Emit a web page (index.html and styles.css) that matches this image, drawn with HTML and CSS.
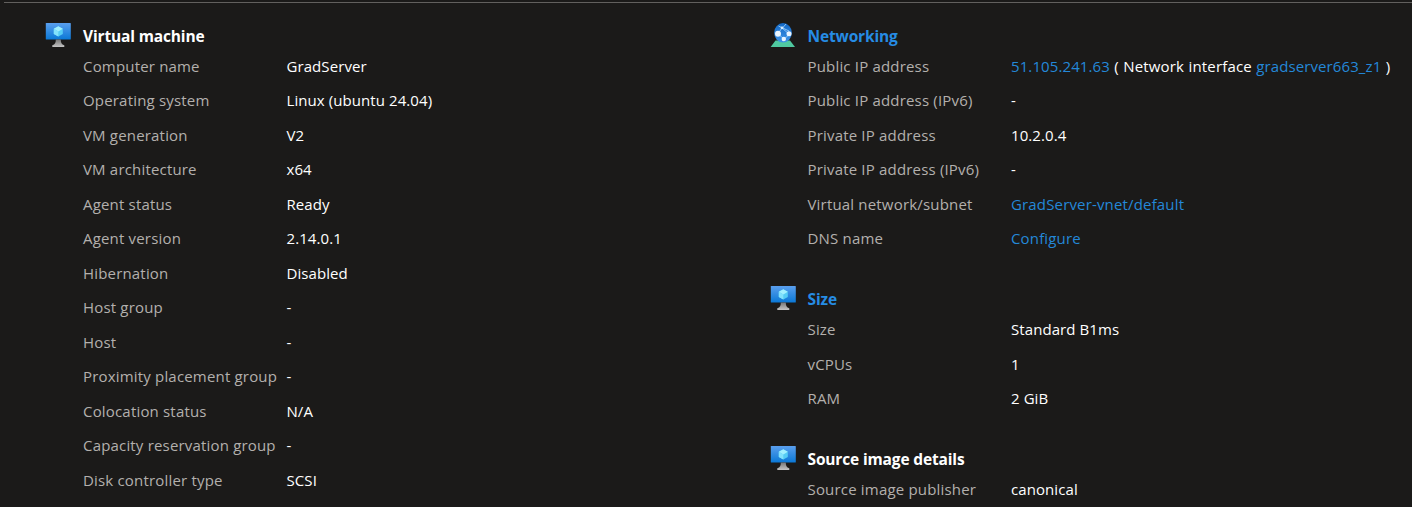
FILE: index.html
```
<!DOCTYPE html>
<html lang="en">
<head>
<meta charset="utf-8">
<title>Virtual machine properties</title>
<link rel="stylesheet" href="styles.css">
</head>
<body>
<svg class="defs" width="0" height="0" aria-hidden="true">
  <defs>
    <linearGradient id="screen" x1="0" y1="0" x2="0" y2="1"><stop offset="0" stop-color="#5a9fee"/><stop offset="1" stop-color="#0a78d6"/></linearGradient>
    <linearGradient id="stand" x1="0" y1="0" x2="0" y2="1"><stop offset="0" stop-color="#777"/><stop offset="1" stop-color="#c4c4c4"/></linearGradient>
    <linearGradient id="globe" x1="0" y1="0" x2="0" y2="1"><stop offset="0" stop-color="#1267c4"/><stop offset="1" stop-color="#3d94e8"/></linearGradient>
    <symbol id="vm" viewBox="0 0 26 26">
      <rect x="0.8" y="1" width="25" height="16.500" rx="0.6" fill="url(#screen)"/>
      <path d="M10.800 17.500h5c0 3.200.7 5 3.500 5.700V25h-12v-1.800c2.800-.7 3.500-2.500 3.500-5.700z" fill="url(#stand)"/>
      <path d="M13.300 4.300l4.500 2.500v5.200l-4.500 2.600-4.500-2.600V6.800z" fill="#55cdf5"/>
      <path d="M13.300 4.300l4.500 2.500-4.500 2.600-4.500-2.600z" fill="#a2f0ff"/>
      <path d="M13.300 9.400v5.200l-4.500-2.600V6.800z" fill="#83e2fc"/>
    </symbol>
    <symbol id="net" viewBox="0 0 26 26">
      <path d="M5.500 18.500h14.500l5 6.500H.6z" fill="#4fc9a0"/>
      <ellipse cx="13" cy="10.800" rx="8.900" ry="9.700" fill="url(#globe)"/>
      <path d="M8 11.500l4-5.500M8 12l6 5 5.500-4.500M8.500 4l10.500 5M12 6l7 6M12.500 6l3.500-4" fill="none" stroke="#8ac4f8" stroke-width="1"/>
      <circle cx="12" cy="5.800" r="1.400" fill="#d3eaff"/>
      <circle cx="8" cy="11.800" r="3" fill="#e9f4ff"/>
      <circle cx="19" cy="11.800" r="2.500" fill="#e9f4ff"/>
      <circle cx="13.800" cy="17" r="2.200" fill="#e9f4ff"/>
    </symbol>
  </defs>
</svg>
<main class="panel">
  <div class="column">
    <section class="group">
      <h2 class="title"><svg class="icon"><use href="#vm"/></svg><span class="label">Virtual machine</span></h2>
      <dl class="props">
        <dt>Computer name</dt><dd>GradServer</dd>
        <dt>Operating system</dt><dd>Linux (ubuntu 24.04)</dd>
        <dt>VM generation</dt><dd>V2</dd>
        <dt>VM architecture</dt><dd>x64</dd>
        <dt>Agent status</dt><dd>Ready</dd>
        <dt>Agent version</dt><dd>2.14.0.1</dd>
        <dt>Hibernation</dt><dd>Disabled</dd>
        <dt>Host group</dt><dd>-</dd>
        <dt>Host</dt><dd>-</dd>
        <dt>Proximity placement group</dt><dd>-</dd>
        <dt>Colocation status</dt><dd>N/A</dd>
        <dt>Capacity reservation group</dt><dd>-</dd>
        <dt>Disk controller type</dt><dd>SCSI</dd>
      </dl>
    </section>
  </div>
  <div class="column">
    <section class="group">
      <h2 class="title"><svg class="icon"><use href="#net"/></svg><a class="label link">Networking</a></h2>
      <dl class="props">
        <dt>Public IP address</dt><dd class="address"><a class="link">51.105.241.63</a> ( Network interface <a class="link">gradserver663_z1</a> )</dd>
        <dt>Public IP address (IPv6)</dt><dd>-</dd>
        <dt>Private IP address</dt><dd>10.2.0.4</dd>
        <dt>Private IP address (IPv6)</dt><dd>-</dd>
        <dt>Virtual network/subnet</dt><dd><a class="link">GradServer-vnet/default</a></dd>
        <dt>DNS name</dt><dd><a class="link">Configure</a></dd>
      </dl>
    </section>
    <section class="group">
      <h2 class="title"><svg class="icon"><use href="#vm"/></svg><a class="label link">Size</a></h2>
      <dl class="props">
        <dt>Size</dt><dd>Standard B1ms</dd>
        <dt>vCPUs</dt><dd>1</dd>
        <dt>RAM</dt><dd>2 GiB</dd>
      </dl>
    </section>
    <section class="group">
      <h2 class="title"><svg class="icon"><use href="#vm"/></svg><span class="label">Source image details</span></h2>
      <dl class="props">
        <dt>Source image publisher</dt><dd>canonical</dd>
      </dl>
    </section>
  </div>
</main>
</body>
</html>
```
FILE: styles.css
```
* { box-sizing: border-box; }
body {
  margin: 0;
  height: 507px;
  overflow: hidden;
  background: #1b1a19;
  color: #fff;
  font: 15px/20px "Open Sans", "Noto Sans", sans-serif;
}
.defs { display: block; }
.panel {
  display: grid;
  grid-template-columns: 724.5px 1fr;
  margin-top: 2px;
  margin-left: 4px;
  padding: 19px 0 0 41px;
  border-top: 1px solid #62605e;
}
.column { display: flex; flex-direction: column; gap: 29.75px; }
.title {
  display: flex;
  align-items: center;
  gap: 12px;
  height: 26px;
  margin: 0;
  font-size: 15.5px;
  font-weight: 700;
  letter-spacing: -0.15px;
}
.label { padding-top: 1px; }
.icon { width: 26px; height: 26px; flex: none; }
.props {
  display: grid;
  grid-template-columns: 203.5px 1fr;
  grid-auto-rows: 34.5px;
  align-items: center;
  margin: 0;
  padding: 0.5px 0 0 38px;
  white-space: nowrap;
}
dt { color: #b3b0ad; letter-spacing: 0.18px; }
dd { margin: 0; letter-spacing: 0.08px; }
dd > .link { letter-spacing: 0.16px; }
.address { letter-spacing: 0.17px; word-spacing: 0.3px; }
.address > .link { letter-spacing: 0.1px; }
.link { color: #2488d8; }
.title .link { color: #268ce4; }
```
